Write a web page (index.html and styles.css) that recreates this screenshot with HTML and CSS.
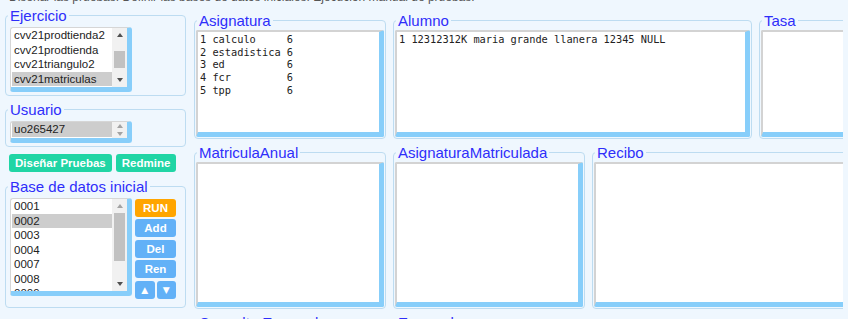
FILE: index.html
```html
<!DOCTYPE html>
<html lang="es">
<head>
  <meta charset="UTF-8">
  <meta name="viewport" content="width=device-width, initial-scale=1.0">
  <title>Pruebas de base de datos</title>
  <link rel="stylesheet" href="styles.css">
</head>
<body>

<p class="intro">Diseñar las pruebas. Definir las bases de datos iniciales. Ejecución manual de pruebas.</p>

<div class="main">
  <div class="side">
    <fieldset class="box">
      <legend>Ejercicio</legend>
      <div class="list">
        <ul class="items">
          <li>cvv21prodtienda2</li>
          <li>cvv21prodtienda</li>
          <li>cvv21triangulo2</li>
          <li class="sel">cvv21matriculas</li>
        </ul>
        <div class="bar">
          <span class="arrow up"></span>
          <div class="track"><div class="thumb" style="margin-top: 9px; height: 17px"></div></div>
          <span class="arrow down"></span>
        </div>
      </div>
    </fieldset>

    <fieldset class="box">
      <legend>Usuario</legend>
      <div class="list single">
        <ul class="items">
          <li class="sel">uo265427</li>
        </ul>
        <div class="bar">
          <span class="arrow up off"></span>
          <span class="arrow down off"></span>
        </div>
      </div>
    </fieldset>

    <div class="links">
      <button type="button" class="link">Diseñar Pruebas</button>
      <button type="button" class="link">Redmine</button>
    </div>

    <fieldset class="box base">
      <legend>Base de datos inicial</legend>
      <div class="db">
        <div class="list tall">
          <ul class="items">
            <li>0001</li>
            <li class="sel">0002</li>
            <li>0003</li>
            <li>0004</li>
            <li>0007</li>
            <li>0008</li>
            <li>0009</li>
          </ul>
          <div class="bar">
            <span class="arrow up off"></span>
            <div class="track"><div class="thumb" style="margin-top: 0; height: 48px"></div></div>
            <span class="arrow down"></span>
          </div>
        </div>
        <div class="actions">
          <button type="button" class="act run">RUN</button>
          <button type="button" class="act">Add</button>
          <button type="button" class="act">Del</button>
          <button type="button" class="act">Ren</button>
          <div class="moves">
            <button type="button" class="act">&#9650;</button>
            <button type="button" class="act">&#9660;</button>
          </div>
        </div>
      </div>
    </fieldset>
  </div>

  <div class="tables">
    <div class="row">
      <fieldset class="table">
        <legend>Asignatura</legend>
        <textarea class="data w-small h-top" readonly>
1 calculo     6
2 estadistica 6
3 ed          6
4 fcr         6
5 tpp         6</textarea>
      </fieldset>
      <fieldset class="table">
        <legend>Alumno</legend>
        <textarea class="data w-wide h-top" readonly>
1 12312312K maria grande llanera 12345 NULL</textarea>
      </fieldset>
      <fieldset class="table">
        <legend>Tasa</legend>
        <textarea class="data w-small h-top" readonly></textarea>
      </fieldset>
    </div>

    <div class="row">
      <fieldset class="table">
        <legend>MatriculaAnual</legend>
        <textarea class="data w-small h-mid" readonly></textarea>
      </fieldset>
      <fieldset class="table">
        <legend>AsignaturaMatriculada</legend>
        <textarea class="data w-small h-mid" readonly></textarea>
      </fieldset>
      <fieldset class="table">
        <legend>Recibo</legend>
        <textarea class="data w-wide h-mid" readonly></textarea>
      </fieldset>
    </div>

    <div class="row">
      <fieldset class="table">
        <legend>Consulta Esperada</legend>
        <textarea class="data w-small h-mid" readonly></textarea>
      </fieldset>
      <fieldset class="table">
        <legend>Esperado</legend>
        <textarea class="data w-small h-mid" readonly></textarea>
      </fieldset>
    </div>
  </div>
</div>

</body>
</html>
```

FILE: styles.css
```css
html, body {
  margin: 0;
  overflow: hidden;
  background-color: #eff7fe;
}

body {
  font-family: "Liberation Sans", Arial, sans-serif;
}

.intro {
  margin: -10px 0 0 9px;
  font-size: 12px;
  line-height: 14px;
  color: #555;
}

.main {
  display: flex;
  align-items: flex-start;
  gap: 8px;
  padding: 3px 5px 0;
}

.side {
  flex: none;
  width: 181px;
}

legend {
  padding: 0 2px;
  color: #2e2efa;
  font-size: 15px;
}

.box {
  margin: 0;
  padding: 3px 4px;
  border: 1px solid #bddcf1;
  border-radius: 4px;
}

.box + .box {
  margin-top: 5px;
}

.box legend {
  margin-left: -2px;
}

/* list boxes */
.list {
  display: flex;
  box-sizing: border-box;
  width: 122px;
  height: 65px;
  background: #fff;
  border: 1px solid #d6d6d6;
  border-right: 5px solid #87cefa;
  border-bottom: 5px solid #87cefa;
  border-radius: 3px;
  overflow: hidden;
}

.items {
  flex: 1;
  min-width: 0;
  margin: 0;
  padding: 0 0 0 1px;
  list-style: none;
  overflow: hidden;
  font-size: 11.5px;
  color: #222;
}

.items li {
  height: 14.5px;
  line-height: 14.5px;
  padding: 0 2px;
  white-space: nowrap;
}

.items .sel {
  background-color: #cdcdcd;
}

.bar {
  flex: none;
  display: flex;
  flex-direction: column;
  width: 15px;
  background-color: #f1f1f1;
}

.arrow {
  flex: none;
  display: flex;
  align-items: center;
  justify-content: center;
  height: 14px;
}

.arrow::before {
  content: "";
  border-left: 3.5px solid transparent;
  border-right: 3.5px solid transparent;
}

.up::before {
  border-bottom: 4px solid #505050;
}

.down::before {
  border-top: 4px solid #505050;
}

.up.off::before {
  border-bottom-color: #a3a3a3;
}

.down.off::before {
  border-top-color: #a3a3a3;
}

.track {
  flex: 1;
}

.thumb {
  margin: 0 2px;
  background-color: #c1c1c1;
}

.single {
  height: 22px;
}

.single .arrow {
  height: 8px;
}

.tall {
  height: 98px;
}

/* buttons */
.links {
  display: flex;
  gap: 4px;
  margin: 7px 0 6px 4px;
}

.link {
  height: 18px;
  padding: 0 6px;
  border: none;
  border-radius: 3px;
  background-color: #20d5a5;
  color: white;
  font-family: "Liberation Sans", Arial, sans-serif;
  font-size: 11.5px;
  font-weight: bold;
}

.base {
  padding-bottom: 8px;
}

.db {
  display: flex;
  align-items: flex-start;
  gap: 3px;
}

.actions {
  display: flex;
  flex-direction: column;
  gap: 2.5px;
  width: 41px;
  margin-top: 0.5px;
}

.act {
  height: 18px;
  padding: 0;
  border: none;
  border-radius: 3px;
  background-color: #62b1f7;
  color: white;
  font-family: "Liberation Sans", Arial, sans-serif;
  font-size: 11.5px;
  font-weight: bold;
}

.run {
  background-color: #ffa500;
}

.moves {
  display: flex;
  gap: 2px;
}

.moves .act {
  flex: 1;
  font-family: "DejaVu Sans", sans-serif;
  font-size: 9px;
}

/* tables */
.tables {
  flex: 1;
  min-width: 0;
  overflow: hidden;
  margin-top: 5px;
}

.row {
  display: flex;
  gap: 7px;
  margin-bottom: 5px;
}

.table {
  flex: none;
  margin: 0;
  padding: 1px;
  border: 1px solid #bddcf1;
  border-radius: 4px;
}

.table legend {
  margin-left: 1px;
}

.data {
  display: block;
  box-sizing: border-box;
  margin: 0;
  padding: 1px 2px;
  font-family: "DejaVu Sans Mono", monospace;
  font-size: 10.3px;
  line-height: 12.7px;
  color: #222;
  background: #fff;
  border-style: solid;
  border-width: 2px 5px 5px 2px;
  border-color: #d3d3d3 #87cefa #87cefa #d3d3d3;
  border-radius: 2px;
  resize: none;
  outline: none;
  white-space: pre;
  overflow: hidden;
}

.w-small {
  width: 188px;
}

.w-wide {
  width: 355px;
}

.h-top {
  height: 107px;
}

.h-mid {
  height: 145px;
}
```
